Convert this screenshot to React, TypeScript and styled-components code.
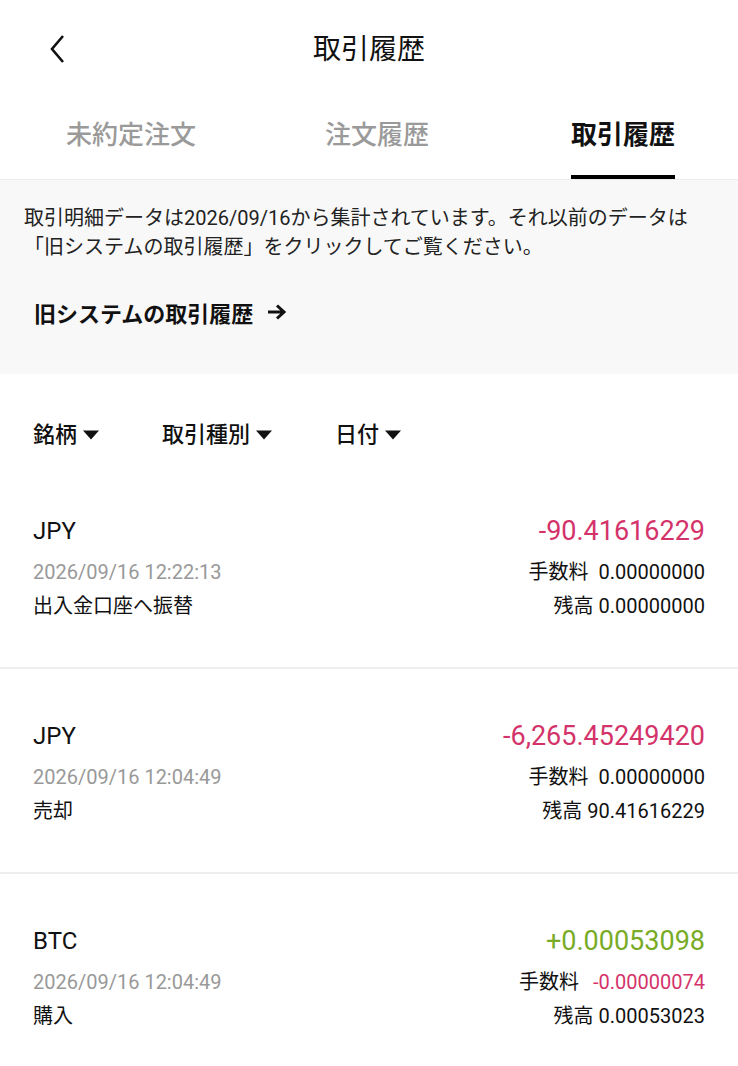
import React from 'react'
import styled, { createGlobalStyle } from 'styled-components'

const GlobalStyle = createGlobalStyle`
  body {
    margin: 0;
    background: #fff;
    font-family: Roboto, "Noto Sans CJK JP", sans-serif;
    color: #111;
  }
`

const Page = styled.div`
  width: 738px;
  min-height: 1066px;
  background: #fff;
`

const Header = styled.header`
  position: relative;
  height: 96px;
  display: flex;
  align-items: center;
  justify-content: center;
`

const BackButton = styled.button`
  position: absolute;
  left: 44px;
  top: 32px;
  width: 28px;
  height: 34px;
  padding: 0;
  border: none;
  background: none;
  display: flex;
  align-items: center;
  justify-content: center;
`

const Title = styled.h1`
  margin: 0;
  font-size: 28px;
  font-weight: 400;
  color: #111;
  position: relative;
  top: -1px;
`

const Tabs = styled.nav`
  display: grid;
  grid-template-columns: repeat(3, 246px);
  padding-left: 8px;
  height: 83px;
  overflow: hidden;
  border-bottom: 1px solid #ececec;
`

const Tab = styled.div<{ $active?: boolean }>`
  display: flex;
  align-items: flex-start;
  justify-content: center;
  padding-top: 18px;
  span {
    display: inline-block;
    height: 65px;
    box-sizing: border-box;
    font-size: 26px;
    line-height: 42px;
    font-weight: ${(p) => (p.$active ? 600 : 500)};
    color: ${(p) => (p.$active ? '#111' : '#9a9a9a')};
    border-bottom: 4px solid ${(p) => (p.$active ? '#000' : 'transparent')};
  }
`

const Notice = styled.section`
  background: #f8f8f8;
  padding: 24px 24px 0;
  height: 194px;
  box-sizing: border-box;
`

const NoticeText = styled.p`
  margin: 0;
  font-size: 20px;
  line-height: 29px;
  color: #222;
  white-space: nowrap;
`

const OldLink = styled.a`
  display: inline-flex;
  align-items: center;
  gap: 14px;
  margin: 34px 0 0 10px;
  font-size: 22px;
  font-weight: 700;
  color: #111;
  text-decoration: none;
`

const Filters = styled.div`
  display: flex;
  gap: 63px;
  padding: 31px 33px 0;
  height: 90px;
  box-sizing: border-box;
`

const Filter = styled.button`
  display: flex;
  align-items: center;
  gap: 6px;
  padding: 0;
  border: none;
  background: none;
  font-family: inherit;
  font-size: 22px;
  font-weight: 500;
  color: #111;
  line-height: 32px;
`

const List = styled.div``

const Row = styled.div`
  display: flex;
  justify-content: space-between;
  padding: 50px 33px 0;
  height: 205px;
  box-sizing: border-box;
  border-bottom: 2px solid #eeeeee;
  &:last-child {
    border-bottom: none;
  }
`

const Col = styled.div<{ $right?: boolean }>`
  display: flex;
  flex-direction: column;
  align-items: ${(p) => (p.$right ? 'flex-end' : 'flex-start')};
`

const Coin = styled.div`
  font-size: 24px;
  line-height: 34px;
  color: #111;
`

const Amount = styled.div<{ $tone: 'neg' | 'pos' }>`
  font-size: 27px;
  line-height: 34px;
  color: ${(p) => (p.$tone === 'neg' ? '#d4336a' : '#79ab27')};
`

const Time = styled.div`
  margin-top: 9px;
  font-size: 20px;
  line-height: 30px;
  color: #999;
`

const Line = styled.div<{ $gap?: number }>`
  margin-top: ${(p) => p.$gap ?? 4}px;
  font-size: 20px;
  line-height: 30px;
  color: #111;
`

const Fee = styled.span<{ $neg?: boolean }>`
  margin-left: ${(p) => (p.$neg ? 14 : 10)}px;
  color: ${(p) => (p.$neg ? '#d4336a' : '#111')};
`

const Caret = () => (
  <svg width="16" height="10" viewBox="0 0 16 10">
    <path d="M0 0.5 H16 L8 9.5 Z" fill="#111" />
  </svg>
)

type Tx = {
  coin: string
  amount: string
  tone: 'neg' | 'pos'
  time: string
  kind: string
  fee: string
  feeNeg?: boolean
  balance: string
}

const txs: Tx[] = [
  {
    coin: 'JPY',
    amount: '-90.41616229',
    tone: 'neg',
    time: '2026/09/16 12:22:13',
    kind: '出入金口座へ振替',
    fee: '0.00000000',
    balance: '0.00000000',
  },
  {
    coin: 'JPY',
    amount: '-6,265.45249420',
    tone: 'neg',
    time: '2026/09/16 12:04:49',
    kind: '売却',
    fee: '0.00000000',
    balance: '90.41616229',
  },
  {
    coin: 'BTC',
    amount: '+0.00053098',
    tone: 'pos',
    time: '2026/09/16 12:04:49',
    kind: '購入',
    fee: '-0.00000074',
    feeNeg: true,
    balance: '0.00053023',
  },
]

export default function App() {
  return (
    <Page>
      <GlobalStyle />
      <Header>
        <BackButton aria-label="戻る">
          <svg width="22" height="32" viewBox="0 0 22 32">
            <path d="M16 3 L5 16 L16 29" fill="none" stroke="#111" strokeWidth="2.6" />
          </svg>
        </BackButton>
        <Title>取引履歴</Title>
      </Header>
      <Tabs>
        <Tab><span>未約定注文</span></Tab>
        <Tab><span>注文履歴</span></Tab>
        <Tab $active><span>取引履歴</span></Tab>
      </Tabs>
      <Notice>
        <NoticeText>
          取引明細データは2026/09/16から集計されています。それ以前のデータは
          <br />
          「旧システムの取引履歴」をクリックしてご覧ください。
        </NoticeText>
        <OldLink href="#">
          旧システムの取引履歴
          <svg width="20" height="18" viewBox="0 0 20 18">
            <path d="M1 9 H17 M10 2.5 L17 9 L10 15.5" fill="none" stroke="#111" strokeWidth="3" />
          </svg>
        </OldLink>
      </Notice>
      <Filters>
        <Filter>銘柄<Caret /></Filter>
        <Filter>取引種別<Caret /></Filter>
        <Filter>日付<Caret /></Filter>
      </Filters>
      <List>
        {txs.map((t, i) => (
          <Row key={i}>
            <Col>
              <Coin>{t.coin}</Coin>
              <Time>{t.time}</Time>
              <Line>{t.kind}</Line>
            </Col>
            <Col $right>
              <Amount $tone={t.tone}>{t.amount}</Amount>
              <Line $gap={9}>
                手数料<Fee $neg={t.feeNeg}>{t.fee}</Fee>
              </Line>
              <Line>残高 {t.balance}</Line>
            </Col>
          </Row>
        ))}
      </List>
    </Page>
  )
}
